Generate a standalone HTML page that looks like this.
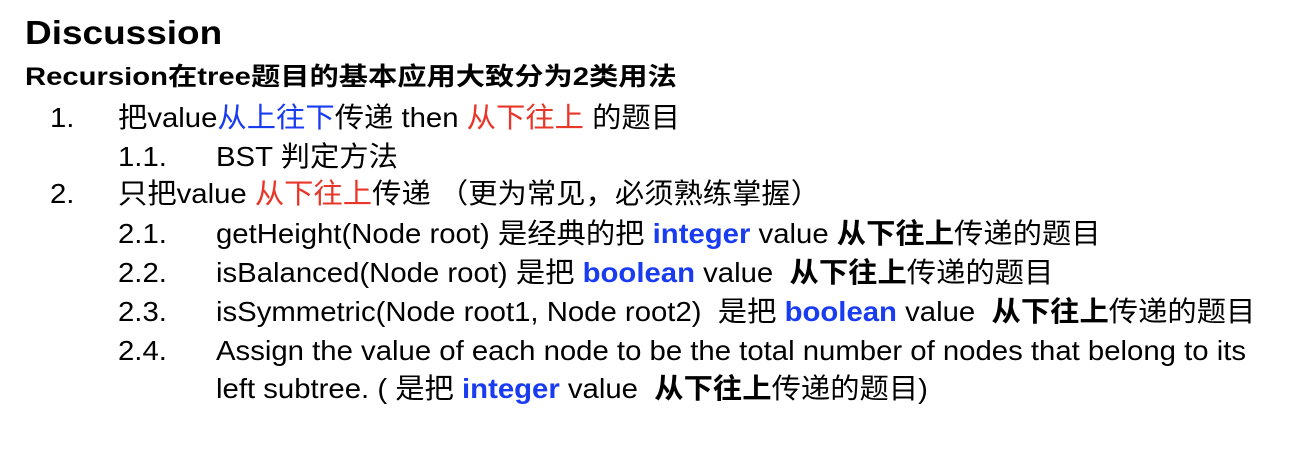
<!DOCTYPE html>
<html><head><meta charset="utf-8"><style>
body{margin:0;width:1292px;height:470px;background:#fff;position:relative;overflow:hidden;font-family:"Liberation Sans","Noto Sans CJK SC",sans-serif;color:#000}
.l{position:absolute;white-space:nowrap;font-size:28px;line-height:28px;transform-origin:0 0;transform:scaleX(1.047)}
.b{color:#1a3cf0}.r{color:#e8372a}
.bb{color:#1a3cf0;font-weight:bold}
</style></head><body>
<div class="l" style="left:25px;top:16px;font-size:33px;line-height:33px;font-weight:bold;transform:scaleX(1.12)">Discussion</div>
<div class="l" style="left:25px;top:65px;font-size:25px;line-height:25px;font-weight:bold;transform:scaleX(1.17)">Recursion在tree题目的基本应用大致分为2类用法</div>
<div class="l" style="left:50px;top:104px">1.</div>
<div class="l" style="left:118px;top:104px">把value<span class="b">从上往下</span>传递 then <span class="r">从下往上</span> 的题目</div>
<div class="l" style="left:118px;top:143px">1.1.</div>
<div class="l" style="left:216px;top:143px">BST 判定方法</div>
<div class="l" style="left:50px;top:180px">2.</div>
<div class="l" style="left:118px;top:180px">只把value <span class="r">从下往上</span>传递 （更为常见，必须熟练掌握）</div>
<div class="l" style="left:118px;top:220px">2.1.</div>
<div class="l" style="left:216px;top:220px">getHeight(Node root) 是经典的把 <span class="bb">integer</span> value <b>从下往上</b>传递的题目</div>
<div class="l" style="left:118px;top:259px">2.2.</div>
<div class="l" style="left:216px;top:259px">isBalanced(Node root) 是把 <span class="bb">boolean</span> value &nbsp;<b>从下往上</b>传递的题目</div>
<div class="l" style="left:118px;top:298px">2.3.</div>
<div class="l" style="left:216px;top:298px">isSymmetric(Node root1, Node root2) &nbsp;是把 <span class="bb">boolean</span> value &nbsp;<b>从下往上</b>传递的题目</div>
<div class="l" style="left:118px;top:337px">2.4.</div>
<div class="l" style="left:216px;top:337px">Assign the value of each node to be the total number of nodes that belong to its</div>
<div class="l" style="left:216px;top:375px">left subtree. ( 是把 <span class="bb">integer</span> value &nbsp;<b>从下往上</b>传递的题目)</div>
</body></html>
